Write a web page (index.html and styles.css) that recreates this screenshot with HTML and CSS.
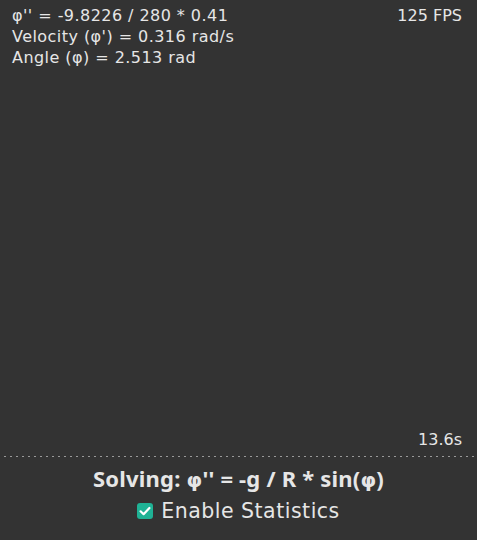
FILE: index.html
```html
<!DOCTYPE html>
<html>
<head>
<meta charset="utf-8">
<link rel="stylesheet" href="styles.css">
</head>
<body>
<div class="app">
  <div class="canvas">
    <div class="stats">
      <div class="line">φ'' = -9.8226 / 280 * 0.41</div>
      <div class="line">Velocity (φ') = 0.316 rad/s</div>
      <div class="line">Angle (φ) = 2.513 rad</div>
    </div>
    <div class="fps">125 FPS</div>
    <div class="time">13.6s</div>
  </div>
  <div class="divider"></div>
  <div class="controls">
    <div class="title">Solving: <span class="phi">φ</span>'' = -g / R * sin(<span class="phi">φ</span>)</div>
    <label class="toggle">
      <span class="box"><svg viewBox="0 0 16 16" width="16" height="16"><path d="M3.6 8.3 L6.6 11.2 L12.4 5" fill="none" stroke="#fff" stroke-width="2.2" stroke-linecap="round" stroke-linejoin="round"/></svg></span>
      <span class="label">Enable Statistics</span>
    </label>
  </div>
</div>
</body>
</html>
```
FILE: styles.css
```css
html, body {
  margin: 0;
  padding: 0;
  background: #333333;
}
body {
  font-family: "DejaVu Sans", sans-serif;
  color: #e6e6e6;
  width: 477px;
  height: 540px;
  overflow: hidden;
}
.app {
  display: flex;
  flex-direction: column;
  height: 540px;
}
.canvas {
  position: relative;
  height: 456px;
}
.stats {
  padding: 5px 0 0 12px;
  font-size: 16px;
  line-height: 21px;
  letter-spacing: 0.45px;
}
.fps {
  position: absolute;
  top: 5px;
  right: 15px;
  font-size: 16px;
  line-height: 21px;
}
.time {
  position: absolute;
  bottom: 6px;
  right: 15px;
  font-size: 16px;
  line-height: 21px;
}
.divider {
  height: 1px;
  margin-left: 4px;
  background: repeating-linear-gradient(to right, #9a9a9a 0 2px, transparent 2px 6px);
}
.controls {
  display: flex;
  flex-direction: column;
  align-items: center;
  padding-top: 6px;
}
.title {
  font-family: "Noto Sans", sans-serif;
  font-size: 22px;
  font-weight: bold;
  line-height: 30px;
  letter-spacing: 0.2px;
}
.phi {
  font-family: "DejaVu Sans", sans-serif;
  font-size: 20px;
}
.toggle {
  display: flex;
  align-items: center;
  gap: 8px;
  font-size: 20.5px;
  line-height: 28px;
  letter-spacing: 0.5px;
  margin-top: 2px;
}
.box {
  width: 16px;
  height: 16px;
  border-radius: 3px;
  background: #1fb295;
  display: flex;
}
```
